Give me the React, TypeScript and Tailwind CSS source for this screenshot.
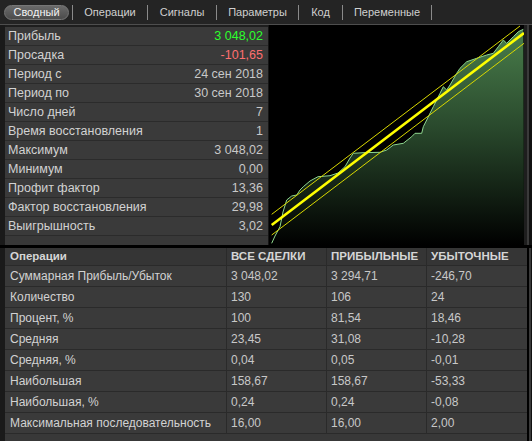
import React from "react";

const font = { fontFamily: '"Liberation Sans", Arial, sans-serif' };

const summary: [string, string, string?][] = [
  ["Прибыль", "3 048,02", "green"],
  ["Просадка", "-101,65", "red"],
  ["Период с", "24 сен 2018"],
  ["Период по", "30 сен 2018"],
  ["Число дней", "7"],
  ["Время восстановления", "1"],
  ["Максимум", "3 048,02"],
  ["Минимум", "0,00"],
  ["Профит фактор", "13,36"],
  ["Фактор восстановления", "29,98"],
  ["Выигрышность", "3,02"],
];

const rows = [
  ["Суммарная Прибыль/Убыток", "3 048,02", "3 294,71", "-246,70"],
  ["Количество", "130", "106", "24"],
  ["Процент, %", "100", "81,54", "18,46"],
  ["Средняя", "23,45", "31,08", "-10,28"],
  ["Средняя, %", "0,04", "0,05", "-0,01"],
  ["Наибольшая", "158,67", "158,67", "-53,33"],
  ["Наибольшая, %", "0,24", "0,24", "-0,08"],
  ["Максимальная последовательность", "16,00", "16,00", "2,00"],
];

const tabs = [
  { label: "Операции", w: "w-[74px]" },
  { label: "Сигналы", w: "w-[68px]" },
  { label: "Параметры", w: "w-[81px]" },
  { label: "Код", w: "w-[43px]" },
  { label: "Переменные", w: "w-[88px]" },
];

const curve: [number, number][] = [
  [271.7, 243.3], [275, 236], [280, 226.7], [283, 212], [286.7, 200], [291.7, 196],
  [296.7, 195], [300, 190], [303.3, 186.7], [310, 181], [318, 176.7], [330, 175.7],
  [338, 173], [345, 166.7], [350, 158], [353.3, 153.3], [363, 152.7], [380, 152.3],
  [386.7, 150], [393.3, 145], [403.3, 143.3], [411.7, 136.7], [415, 133.3], [421.7, 133.3],
  [423.3, 126.7], [426.7, 120], [433.3, 106.7], [440, 93.3], [443.3, 86.7], [446.7, 90],
  [450, 85], [456.7, 73.3], [460, 68.3], [466.7, 61.7], [476.7, 58.3], [486.7, 55],
  [493.3, 53.3], [498.3, 46.7], [503.3, 40], [506.7, 43.3], [513.3, 36.7], [518.3, 31.7],
  [523.3, 29.3],
];

function Chart() {
  const line = curve.map((p, i) => `${i ? "L" : "M"}${p[0]},${p[1]}`).join(" ");
  const area = `${line} L524,245 L271.7,245 Z`;
  return (
    <svg className="block w-[255px] h-[220px]" viewBox="269 25 255 220">
      <defs>
        <linearGradient id="eq" x1="0" y1="28" x2="0" y2="245" gradientUnits="userSpaceOnUse">
          <stop offset="0" stopColor="#4a7f4c" />
          <stop offset="0.45" stopColor="#2a4a2d" />
          <stop offset="1" stopColor="#000000" />
        </linearGradient>
      </defs>
      <rect x="269" y="25" width="255" height="220" fill="#000" />
      <path d={area} fill="url(#eq)" />
      <path d={line} fill="none" stroke="#8fd88f" strokeWidth="1" />
      <line x1="271.7" y1="214.3" x2="520" y2="26" stroke="#d8d800" strokeWidth="1" />
      <line x1="271.7" y1="235" x2="524" y2="43.3" stroke="#d8d800" strokeWidth="1" />
      <line x1="271.7" y1="225" x2="524" y2="33" stroke="#ffff00" strokeWidth="2.6" />
    </svg>
  );
}

export default function App() {
  return (
    <div
      className="w-[532px] h-[441px] overflow-hidden bg-[#1a1a1a] flex flex-col whitespace-nowrap"
      style={font}
    >
      {/* tabs */}
      <div className="h-[25px] shrink-0 flex items-center pl-[4px] bg-[#242424] border-b border-[#4e4e4e] text-[11px]">
        <div className="w-[65px] h-[15px] rounded-full bg-gradient-to-b from-[#6a6a6a] to-[#4c4c4c] border border-[#777] flex items-center justify-center text-[#f2f2f2] leading-none">
          Сводный
        </div>
        <div className="w-[3px]" />
        <div className="w-px h-[15px] bg-[#8a8a8a]" />
        {tabs.map((t) => (
          <React.Fragment key={t.label}>
            <div className={`${t.w} text-center text-[#d0d0d0] leading-none`}>{t.label}</div>
            <div className="w-px h-[15px] bg-[#8a8a8a]" />
          </React.Fragment>
        ))}
      </div>

      {/* top section */}
      <div className="h-[220px] shrink-0 flex pl-[5px] text-[12.5px]">
        <div className="w-[263px] pt-[2px] bg-[#1e1e1e] flex flex-col">
          {summary.map(([label, value, tone]) => (
            <div
              key={label}
              className="h-[19px] shrink-0 flex items-center justify-between pl-[3px] pr-[5px] bg-[#3a3a3a] border-b border-[#2b2b2b]"
            >
              <span className="text-[#d2d2d2]">{label}</span>
              <span
                className={
                  tone === "green"
                    ? "text-[#2cff2c]"
                    : tone === "red"
                      ? "text-[#ff6f6f]"
                      : "text-[#c8c8c8]"
                }
              >
                {value}
              </span>
            </div>
          ))}
          <div className="flex-1 bg-[#383838]" />
        </div>
        <div className="w-px bg-[#151515]" />
        <Chart />
        <div className="flex-1 flex">
          <div className="w-[3px] bg-[#1e1e1e]" />
          <div className="w-[2px] bg-[#3a3a3a]" />
          <div className="flex-1 bg-[#111]" />
        </div>
      </div>

      <div className="h-[3px] shrink-0 bg-black" />

      {/* table */}
      <div className="flex-1 flex pl-[5px] text-[12px]">
        <div className="w-[522px] flex flex-col bg-[#383838]">
          <div className="h-[18px] shrink-0 grid grid-cols-[221px_100px_100px_101px] bg-[#353535] border-b border-[#2a2a2a] font-bold text-[11.5px] text-[#d6d6d6]">
            {["Операции", "ВСЕ СДЕЛКИ", "ПРИБЫЛЬНЫЕ", "УБЫТОЧНЫЕ"].map((h, i) => (
              <div
                key={h}
                className={`flex items-center overflow-hidden ${i === 0 ? "pl-[5px]" : "pl-[4px] border-l border-[#2a2a2a]"}`}
              >
                {h}
              </div>
            ))}
          </div>
          {rows.map((r) => (
            <div
              key={r[0]}
              className="h-[21px] shrink-0 grid grid-cols-[221px_100px_100px_101px] bg-[#3a3a3a] border-b border-[#2a2a2a]"
            >
              {r.map((c, i) => (
                <div
                  key={i}
                  className={`flex items-center overflow-hidden ${i === 0 ? "pl-[5px] text-[#d2d2d2]" : "pl-[4px] border-l border-[#2a2a2a] text-[#c8c8c8]"}`}
                >
                  {c}
                </div>
              ))}
            </div>
          ))}
          <div className="flex-1 bg-[#383838]" />
        </div>
        <div className="flex-1 flex">
          <div className="w-[2px] bg-black" />
          <div className="w-[2px] bg-[#3a3a3a]" />
          <div className="flex-1 bg-[#111]" />
        </div>
      </div>
    </div>
  );
}
